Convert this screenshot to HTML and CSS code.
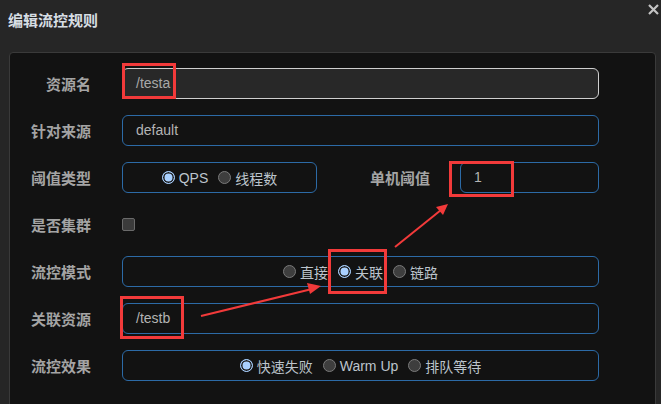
FILE: index.html
```html
<!DOCTYPE html>
<html lang="zh">
<head>
<meta charset="utf-8">
<title>编辑流控规则</title>
<link rel="stylesheet" href="styles.css">
</head>
<body>
<div class="dialog">
  <div class="header">
    <span class="title">编辑流控规则</span>
    <svg class="close" width="11" height="11" viewBox="0 0 11 11"><path d="M1 1L10 10M10 1L1 10" stroke="#c4c4c4" stroke-width="2.2"/></svg>
  </div>
  <div class="panel">
    <div class="row">
      <label class="label">资源名</label>
      <div class="input input-light">/testa</div>
    </div>
    <div class="row">
      <label class="label">针对来源</label>
      <div class="input">default</div>
    </div>
    <div class="row">
      <label class="label">阈值类型</label>
      <div class="split">
        <div class="radio-box small">
          <span class="opt"><span class="radio on"></span>QPS</span>
          <span class="opt"><span class="radio"></span>线程数</span>
        </div>
        <label class="label inline">单机阈值</label>
        <div class="input num">1</div>
      </div>
    </div>
    <div class="row">
      <label class="label">是否集群</label>
      <div class="check-wrap"><span class="check"></span></div>
    </div>
    <div class="row">
      <label class="label">流控模式</label>
      <div class="radio-box">
        <span class="opt"><span class="radio"></span>直接</span>
        <span class="opt"><span class="radio on"></span>关联</span>
        <span class="opt"><span class="radio"></span>链路</span>
      </div>
    </div>
    <div class="row">
      <label class="label">关联资源</label>
      <div class="input">/testb</div>
    </div>
    <div class="row">
      <label class="label">流控效果</label>
      <div class="radio-box">
        <span class="opt"><span class="radio on"></span>快速失败</span>
        <span class="opt"><span class="radio"></span>Warm Up</span>
        <span class="opt"><span class="radio"></span>排队等待</span>
      </div>
    </div>
  </div>
</div>
<svg class="annot" width="661" height="404" viewBox="0 0 661 404">
  <g fill="none" stroke="#f23a3a" stroke-width="3">
    <rect x="123.5" y="64.5" width="51" height="33"/>
    <rect x="450.5" y="162.5" width="62" height="33"/>
    <rect x="329.5" y="250.5" width="56" height="42"/>
    <rect x="121.5" y="297.5" width="61" height="40"/>
    <line x1="201" y1="316" x2="312" y2="289" stroke-width="2"/>
    <line x1="395" y1="247" x2="441" y2="210" stroke-width="2"/>
  </g>
  <g fill="#f23a3a">
    <polygon points="321,286 307,283 310,294"/>
    <polygon points="448,204 436,207 443,215"/>
  </g>
</svg>
</body>
</html>
```
FILE: styles.css
```css
html, body {
  margin: 0;
  padding: 0;
  background: #262626;
  width: 661px;
  height: 404px;
  overflow: hidden;
  font-family: "Liberation Sans", "Noto Sans CJK SC", sans-serif;
}

.dialog {
  position: relative;
  width: 661px;
  height: 404px;
}

.header {
  height: 52px;
  padding: 0 8px;
  display: flex;
  align-items: flex-start;
  justify-content: space-between;
  box-sizing: border-box;
}

.title {
  margin-top: 10px;
  font-family: "Noto Sans CJK SC", sans-serif;
  font-weight: 700;
  font-size: 15px;
  line-height: 20px;
  color: #d6dde3;
}

.close {
  margin-top: 4px;
  margin-right: -6px;
}

.panel {
  margin-left: 9px;
  width: 647px;
  height: 360px;
  box-sizing: border-box;
  background: #121212;
  border: 1px solid #3a3a3a;
  border-radius: 4px 4px 0 0;
  padding-top: 15px;
  display: flex;
  flex-direction: column;
  gap: 16px;
}

.row {
  display: flex;
  align-items: center;
  height: 31px;
}

.label {
  width: 112px;
  flex: none;
  box-sizing: border-box;
  padding-right: 31px;
  text-align: right;
  font-family: "Noto Sans CJK SC", sans-serif;
  font-weight: 700;
  font-size: 15px;
  color: #a4a4a4;
}

.input {
  width: 477px;
  height: 31px;
  box-sizing: border-box;
  border: 1px solid #2c6aa6;
  border-radius: 6px;
  padding-left: 13px;
  font-size: 14px;
  line-height: 29px;
  color: #b4b4b4;
}

.input-light {
  background: #282828;
  border-color: #cfcfcf;
  color: #a8a8a8;
}

.split {
  display: flex;
  align-items: center;
  width: 477px;
}

.radio-box {
  width: 477px;
  height: 31px;
  box-sizing: border-box;
  border: 1px solid #2c6aa6;
  border-radius: 6px;
  display: flex;
  align-items: center;
  justify-content: center;
  gap: 10px;
  font-size: 14px;
  color: #bcc4cc;
}

.radio-box.small {
  width: 195px;
  flex: none;
}

.opt {
  display: flex;
  align-items: center;
  gap: 4px;
  font-family: "Liberation Sans", "Noto Sans CJK SC", sans-serif;
}

.radio {
  width: 13px;
  height: 13px;
  box-sizing: border-box;
  border-radius: 50%;
  border: 1px solid #7a7a7a;
  background: #3e3e3e;
  flex: none;
}

.radio.on {
  border-color: #a9d0ff;
  background: #a9d0ff;
  box-shadow: inset 0 0 0 1.5px #1b1b1b;
}

.label.inline {
  width: auto;
  flex: 1;
  padding-right: 30px;
}

.input.num {
  width: 139px;
  flex: none;
}

.check-wrap {
  display: flex;
  align-items: center;
}

.check {
  width: 13px;
  height: 13px;
  box-sizing: border-box;
  border: 1px solid #6a6a6a;
  border-radius: 2px;
  background: #3b3b3b;
}

.annot {
  position: absolute;
  left: 0;
  top: 0;
  pointer-events: none;
}
```
